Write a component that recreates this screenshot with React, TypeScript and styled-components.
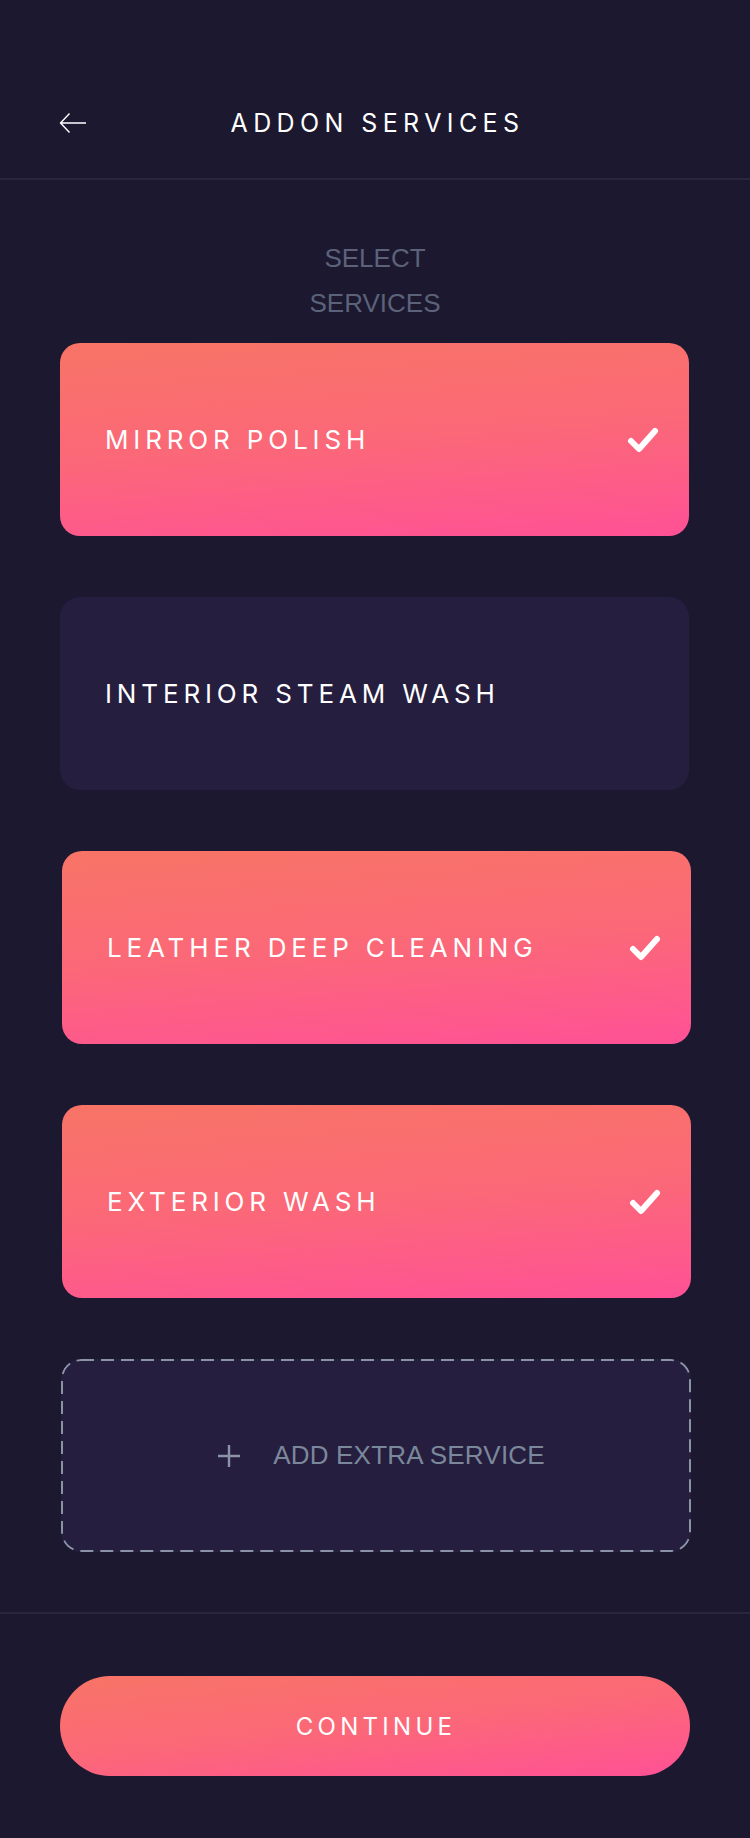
import { FC } from "react";
import styled, { createGlobalStyle } from "styled-components";

const GlobalStyle = createGlobalStyle`
  html, body {
    margin: 0;
    padding: 0;
    background: #1b1830;
  }

  * {
    box-sizing: border-box;
  }
`;

const gradient = "linear-gradient(176deg, #f87466 0%, #fb6878 50%, #ff5196 100%)";

const Page = styled.div`
  width: 750px;
  min-height: 1838px;
  display: flex;
  flex-direction: column;
  background: #1b1830;
  font-family: Inter, "Liberation Sans", sans-serif;
`;

const Header = styled.header`
  display: grid;
  grid-template-columns: 1fr auto 1fr;
  align-items: center;
  height: 180px;
  padding: 98px 59px 30px;
  border-bottom: 2px solid #2a2640;
`;

const BackButton = styled.button`
  justify-self: start;
  display: flex;
  padding: 0;
  border: none;
  background: none;
  color: #ffffff;
  cursor: pointer;
`;

const Title = styled.h1`
  margin: 0 0 0 5px;
  color: #ffffff;
  font-size: 25px;
  font-weight: 400;
  letter-spacing: 5.4px;
  line-height: 50px;
`;

const Main = styled.main`
  display: flex;
  flex-direction: column;
  padding: 56px 60px 60px;
`;

const Subtitle = styled.p`
  width: 180px;
  margin: 0 auto 17px;
  color: #5c6279;
  font-family: "Liberation Sans", Arial, sans-serif;
  font-size: 26px;
  line-height: 45px;
  text-align: center;
`;

const List = styled.div`
  display: flex;
  flex-direction: column;
  gap: 61px;
`;

const ServiceCard = styled.div<{ $selected: boolean; $shift?: number }>`
  display: flex;
  align-items: center;
  justify-content: space-between;
  width: 629px;
  height: 193px;
  margin-left: ${(p) => p.$shift ?? 0}px;
  padding: 0 30px 0 45px;
  border-radius: 20px;
  background: ${(p) => (p.$selected ? gradient : "#251e3f")};
  cursor: pointer;
`;

const ServiceName = styled.span`
  color: #ffffff;
  font-size: 26px;
  font-weight: 400;
  letter-spacing: 4.85px;
`;

const AddCard = styled.div`
  display: flex;
  align-items: center;
  justify-content: center;
  gap: 32px;
  width: 630px;
  height: 193px;
  margin-left: 1px;
  padding-left: 10px;
  border-radius: 20px;
  background-color: #251e3f;
  background-image: url("data:image/svg+xml,%3Csvg xmlns='http://www.w3.org/2000/svg' width='100%25' height='100%25'%3E%3Crect x='1' y='1' width='628' height='191' rx='19' fill='none' stroke='%238a94a6' stroke-width='2' stroke-dasharray='13 7'/%3E%3C/svg%3E");
  cursor: pointer;
`;

const AddLabel = styled.span`
  color: #7b879a;
  font-family: "Liberation Sans", Arial, sans-serif;
  font-size: 26px;
  letter-spacing: 0.2px;
`;

const Footer = styled.footer`
  padding: 62px 60px;
  border-top: 2px solid #2a2640;
`;

const ContinueButton = styled.button`
  display: block;
  width: 630px;
  height: 100px;
  padding-left: 8px;
  border: none;
  border-radius: 50px;
  background: linear-gradient(174deg, #f87466 0%, #fb6878 50%, #ff5196 100%);
  color: #ffffff;
  font-family: Inter, "Liberation Sans", sans-serif;
  font-size: 24px;
  font-weight: 400;
  letter-spacing: 4.3px;
  cursor: pointer;
`;

const ArrowIcon = () => (
  <svg width="28" height="22" viewBox="0 0 28 22" fill="none" stroke="currentColor" strokeWidth="1.4">
    <path d="M27 11H1.5M10.5 1.5L1.5 11l9 9.5" />
  </svg>
);

const CheckIcon = () => (
  <svg width="32" height="26" viewBox="0 0 32 26" fill="none" stroke="#ffffff" strokeWidth="6" strokeLinecap="round" strokeLinejoin="round">
    <path d="M4 14l8 8L28 4" />
  </svg>
);

const PlusIcon = () => (
  <svg width="24" height="24" viewBox="0 0 24 24" fill="none" stroke="#8a94a6" strokeWidth="2.4">
    <path d="M12 1v22M1 12h22" />
  </svg>
);

const services = [
  { name: "MIRROR POLISH", selected: true, shift: 0 },
  { name: "INTERIOR STEAM WASH", selected: false, shift: 0 },
  { name: "LEATHER DEEP CLEANING", selected: true, shift: 2 },
  { name: "EXTERIOR WASH", selected: true, shift: 2 },
];

const App: FC = () => {
  return (
    <>
      <GlobalStyle />
      <Page>
        <Header>
          <BackButton aria-label="Back">
            <ArrowIcon />
          </BackButton>
          <Title>ADDON SERVICES</Title>
        </Header>
        <Main>
          <Subtitle>SELECT SERVICES</Subtitle>
          <List>
            {services.map((s) => (
              <ServiceCard key={s.name} $selected={s.selected} $shift={s.shift}>
                <ServiceName>{s.name}</ServiceName>
                {s.selected && <CheckIcon />}
              </ServiceCard>
            ))}
            <AddCard>
              <PlusIcon />
              <AddLabel>ADD EXTRA SERVICE</AddLabel>
            </AddCard>
          </List>
        </Main>
        <Footer>
          <ContinueButton>CONTINUE</ContinueButton>
        </Footer>
      </Page>
    </>
  );
};

export default App;
